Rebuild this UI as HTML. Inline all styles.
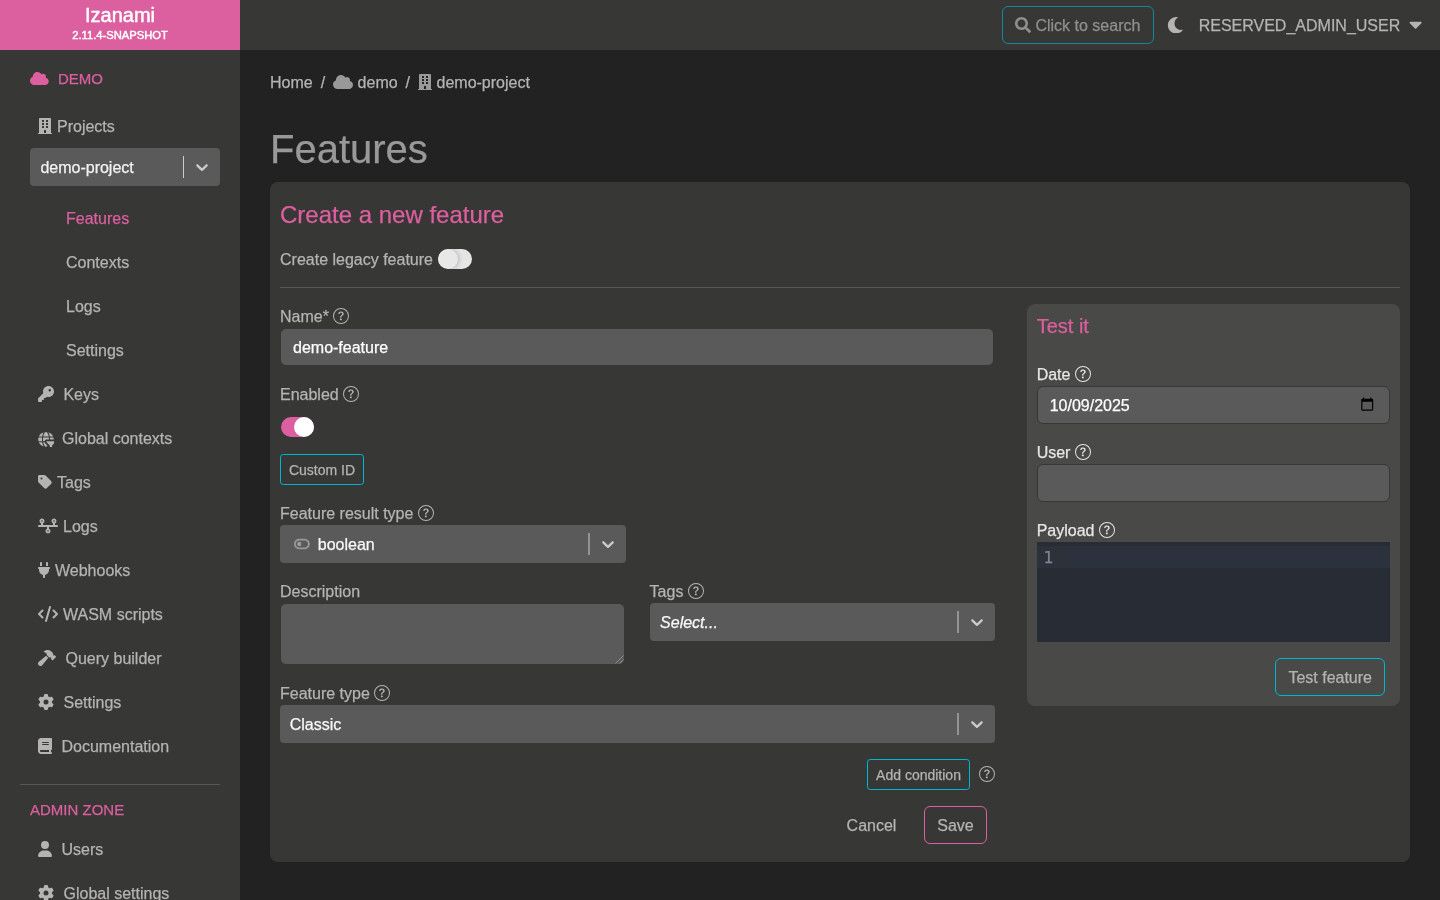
<!DOCTYPE html>
<html lang="en" data-theme="dark">
<head>
<meta charset="utf-8">
<meta name="viewport" content="width=device-width, initial-scale=1">
<title>Izanami - Features</title>
<style>
*,*::before,*::after{box-sizing:border-box}
html,body{margin:0;padding:0}
html{width:1440px;height:900px;overflow:hidden;background:#222}
body{
  position:relative;width:1440px;height:900px;overflow:hidden;
  background:#222;color:#b5b3b3;
  font-family:"Liberation Sans",Arial,Helvetica,sans-serif;
  font-size:16px;line-height:24px;
  -webkit-font-smoothing:antialiased;
  -webkit-text-stroke:0.25px;
}
.topbar,.sidebar,main{will-change:transform}
a{color:inherit;text-decoration:none}
ul{list-style:none;margin:0;padding:0}
h1,h2,h3,h4,p{margin:0;font-weight:400}
button{font-family:inherit;font-size:16px;line-height:24px;cursor:pointer;background:transparent;margin:0}
input,textarea{font-family:inherit;font-size:16px;line-height:24px;margin:0}
svg{display:block;fill:currentColor}
.ico{display:block;flex:none;position:relative;top:-1px}
.ico svg{position:absolute;left:0;top:0;width:100%;height:100%}

/* ---------- top bar ---------- */
.topbar{position:absolute;left:0;top:0;width:1440px;height:50px;background:#373735}
.brand{position:absolute;left:0;top:0;width:240px;height:50px;background:#dc5f9f;color:#fff;text-align:center;-webkit-text-stroke:.45px}
.brand .name{position:absolute;left:0;width:240px;top:3px;font-size:20px;line-height:24px}
.brand .version{position:absolute;left:0;width:240px;top:27px;font-size:11.2px;line-height:16px}
.search{position:absolute;left:1002px;top:6px;width:152px;height:38px;border:1px solid #00b4d4;border-radius:6px;color:#c0bebe;padding:0;text-align:left;opacity:.65}
.search .ico{position:absolute;left:12px;top:10px;width:16px;height:16px}
.search .txt{position:absolute;left:32.45px;top:7px;white-space:nowrap}
.theme.ico{position:absolute;left:1166.5px;top:16.8px;width:16.5px;height:16.5px;color:#b5b3b3}
.usermenu{position:absolute;left:1198.7px;top:14px;height:24px;color:#b5b3b3;white-space:nowrap}
.usermenu .caret.ico{position:absolute;left:210.7px;top:-.4px;width:13.2px;height:20.8px;color:#b5b3b3}

/* ---------- sidebar ---------- */
.sidebar{position:absolute;left:0;top:50px;width:240px;height:850px;background:#373735;color:#b5b3b3}
.sidebar .tenant{position:absolute;left:30px;top:17px;height:24px;color:#dc5f9f;white-space:nowrap;display:flex;align-items:center;font-size:15px}
.sidebar .item{position:absolute;left:38px;height:24px;white-space:nowrap;display:flex;align-items:center;margin-top:1px}
.sidebar .sub{position:absolute;left:66px;height:24px;white-space:nowrap;margin-top:1px}
.sidebar .active{color:#dc5f9f}
.sidebar hr{position:absolute;left:20px;top:734px;width:200px;height:1px;border:0;margin:0;background:#575655}
.sidebar .zone{position:absolute;left:30px;top:748px;color:#dc5f9f;white-space:nowrap;font-size:15px}

/* react-select look */
.rs{position:absolute;height:38px;background:#5a5a5a;border-radius:4px;color:#f7f7f7}
.rs .val{position:absolute;left:10.4px;top:8px;white-space:nowrap;display:flex;align-items:center;height:24px}
.rs .val.ph{font-style:italic}
.rs .tg{color:#999;margin-right:7.6px;top:-1px}
.rs .sep{position:absolute;right:36px;top:8px;width:2px;height:22px;background:rgba(204,204,204,.5)}
.rs.crisp .sep{width:1px;background:#ccc}
.rs.crisp{color:#f2f2f2}
.rs .chev.ico{position:absolute;right:8px;top:9px;width:20px;height:20px;color:#ccc}

/* ---------- main ---------- */
main{position:absolute;left:240px;top:50px;width:1200px;height:850px}
.crumbs{position:absolute;left:30px;top:21px;height:24px;white-space:nowrap;color:#b5b3b3;display:flex;align-items:center}
.crumbs a{display:flex;align-items:center}
.crumbs .ico{color:#999}
.crumbs .slash{display:block;padding:0 8px}
h1.title{position:absolute;left:30px;top:75px;font-size:40px;line-height:48px;color:#999;font-weight:400}
.card{position:absolute;left:30px;top:132px;width:1140px;height:680px;background:#373735;border-radius:8px}
.card h2{position:absolute;left:10px;top:18px;font-size:24px;line-height:29px;color:#dc5f9f}
.lbl{position:absolute;height:24px;white-space:pre;color:#b5b3b3;display:flex;align-items:center;margin-top:1px}
.lbl .q{display:block;flex:none;position:relative;top:-1px;width:16px;height:16px}
.lbl .q svg{width:16px;height:16px}
.field{position:absolute;background:#5a5a5a;border:1px solid #373735;border-radius:6px;color:#fff;padding:2px 12px 0;height:36px;outline:0}
.switch{position:absolute;width:33.4px;height:20px;border-radius:10px}
.switch i{position:absolute;top:0;width:20px;height:20px;border-radius:50%;background:#fff}
.switch.off{background:#e5e5e5;overflow:hidden}
.switch.off i{left:0;background:#e8e8e8;box-shadow:1px 0 5px 0 rgba(0,0,0,.22)}
.switch.on{background:#dc5f9f}
.switch.on i{right:0}
.btn{position:absolute;border:1px solid #00b4d4;border-radius:6px;color:#b5b3b3;padding:2px 0 0;text-align:center;white-space:nowrap}
.btn.sm{font-size:14px;line-height:21px;border-radius:3.2px}
.btn.plain{border-color:transparent}
.btn.save{border-color:#dc5f9f}
.field.txt{display:flex;align-items:center;white-space:nowrap}
.field.date{display:flex;align-items:center;padding-top:1px}
.field.date .cal{position:absolute;left:322.13px;top:9.9px;width:14.4px;height:14.4px;color:#000}
.field.date .cal svg{width:14.4px;height:14.4px}
.grip{position:absolute;width:10px;height:10px}
.sepline{position:absolute;left:10px;top:105px;width:1120px;height:1px;border:0;margin:0;background:#575655}

.test{position:absolute;left:756.67px;top:122px;width:373.33px;height:402px;background:#494948;border-radius:8px}
.test h3{position:absolute;left:10px;top:10px;font-size:20px;line-height:24px;color:#dc5f9f}
.test .lbl{color:#e6e6e6}
.editor{position:absolute;left:10px;top:238.3px;width:353.33px;height:100px;background:#282c34;overflow:hidden}
.editor .line{position:absolute;left:32px;top:4px;width:322px;height:22px;background:#2b313d}
.editor .gutter{position:absolute;left:0;top:4px;width:32px;height:22px;background:#2c313a;font-family:"DejaVu Sans Mono","Liberation Mono",monospace;font-size:16px;line-height:22px;color:#7d8799;text-align:left;padding:1px 0 0 6.8px}
</style>
</head>
<body>

<header class="topbar">
  <a class="brand"><span class="name">Izanami</span><span class="version">2.11.4-SNAPSHOT</span></a>
  <button class="search" type="button"><span class="ico"><svg viewBox="0 0 512 512" aria-hidden="true"><path d="M505 442.7L405.3 343c-4.500-4.500-10.600-7-17-7H372c27.600-35.300 44-79.700 44-128C416 93.100 322.900 0 208 0S0 93.100 0 208s93.100 208 208 208c48.300 0 92.700-16.400 128-44v16.300c0 6.400 2.500 12.500 7 17l99.700 99.700c9.400 9.400 24.600 9.400 33.900 0l28.300-28.300c9.400-9.400 9.400-24.600.1-34zM208 336c-70.700 0-128-57.200-128-128 0-70.700 57.200-128 128-128 70.700 0 128 57.200 128 128 0 70.700-57.200 128-128 128z"/></svg></span><span class="txt">Click to search</span></button>
  <span class="theme ico"><svg viewBox="0 0 512 512" aria-hidden="true"><path d="M283.211 512c78.962 0 151.079-35.925 198.857-94.792 7.068-8.708-.639-21.430-11.562-19.350-124.203 23.654-238.262-71.576-238.262-196.954 0-72.222 38.662-138.635 101.498-174.394 9.686-5.512 7.250-20.197-3.756-22.230A258.156 258.156 0 0 0 283.211 0c-141.309 0-256 114.511-256 256 0 141.309 114.511 256 256 256z"/></svg></span>
  <div class="usermenu">RESERVED_ADMIN_USER<span class="caret ico"><svg viewBox="0 0 320 512" aria-hidden="true"><path d="M31.300 192h257.300c17.800 0 26.700 21.500 14.100 34.100L174.100 354.800c-7.800 7.800-20.500 7.800-28.300 0L17.200 226.100C4.600 213.500 13.500 192 31.300 192z"/></svg></span></div>
</header>

<aside class="sidebar">
  <a class="tenant"><span class="ico" style="width:18.75px;height:15px;margin-right:9.25px;top:-.5px"><svg viewBox="0 0 640 512" aria-hidden="true"><path d="M537.600 226.600c4.100-10.700 6.400-22.400 6.400-34.600 0-53-43-96-96-96-19.700 0-38.100 6-53.300 16.200C367 64.200 315.300 32 256 32c-88.400 0-160 71.600-160 160 0 2.700.1 5.400.2 8.100C40.200 219.800 0 273.200 0 336c0 79.500 64.500 144 144 144h368c70.700 0 128-57.300 128-128 0-61.900-44-113.600-102.400-125.400z"/></svg></span>DEMO</a>
  <nav>
    <a class="item" style="top:64px"><span class="ico" style="width:14px;height:16px;margin-right:5px"><svg viewBox="0 0 448 512" aria-hidden="true"><path d="M436 480h-20V24c0-13.255-10.745-24-24-24H56C42.745 0 32 10.745 32 24v456H12c-6.627 0-12 5.373-12 12v20h448v-20c0-6.627-5.373-12-12-12zM128 76c0-6.627 5.373-12 12-12h40c6.627 0 12 5.373 12 12v40c0 6.627-5.373 12-12 12h-40c-6.627 0-12-5.373-12-12V76zm0 96c0-6.627 5.373-12 12-12h40c6.627 0 12 5.373 12 12v40c0 6.627-5.373 12-12 12h-40c-6.627 0-12-5.373-12-12v-40zm52 148h-40c-6.627 0-12-5.373-12-12v-40c0-6.627 5.373-12 12-12h40c6.627 0 12 5.373 12 12v40c0 6.627-5.373 12-12 12zm76 160h-64v-84c0-6.627 5.373-12 12-12h40c6.627 0 12 5.373 12 12v84zm64-172c0 6.627-5.373 12-12 12h-40c-6.627 0-12-5.373-12-12v-40c0-6.627 5.373-12 12-12h40c6.627 0 12 5.373 12 12v40zm0-96c0 6.627-5.373 12-12 12h-40c-6.627 0-12-5.373-12-12v-40c0-6.627 5.373-12 12-12h40c6.627 0 12 5.373 12 12v40zm0-96c0 6.627-5.373 12-12 12h-40c-6.627 0-12-5.373-12-12V76c0-6.627 5.373-12 12-12h40c6.627 0 12 5.373 12 12v40z"/></svg></span>Projects</a>
    <div class="rs crisp" style="left:30px;top:98px;width:190px"><span class="val">demo-project</span><span class="sep"></span><span class="chev ico"><svg viewBox="0 0 20 20" aria-hidden="true"><path d="M4.516 7.548c0.436-0.446 1.043-0.481 1.576 0l3.908 3.747 3.908-3.747c0.533-0.481 1.141-0.446 1.574 0 0.436 0.445 0.408 1.197 0 1.615-0.406 0.418-4.695 4.502-4.695 4.502-0.217 0.223-0.502 0.335-0.787 0.335s-0.570-0.112-0.789-0.335c0 0-4.287-4.084-4.695-4.502s-0.436-1.170 0-1.615z"/></svg></span></div>
    <ul>
      <li><a class="sub active" style="top:156px">Features</a></li>
      <li><a class="sub" style="top:200px">Contexts</a></li>
      <li><a class="sub" style="top:244px">Logs</a></li>
      <li><a class="sub" style="top:288px">Settings</a></li>
    </ul>
    <a class="item" style="top:332px"><span class="ico" style="width:16px;height:16px;margin-right:9.4px"><svg viewBox="0 0 512 512" aria-hidden="true"><path d="M336 352c97.200 0 176-78.800 176-176S433.200 0 336 0 160 78.800 160 176c0 18.700 2.900 36.800 8.300 53.700L7 391c-4.500 4.500-7 10.600-7 17v80c0 13.300 10.700 24 24 24h80c13.300 0 24-10.700 24-24v-40h40c13.300 0 24-10.700 24-24v-40h40c6.400 0 12.500-2.500 17-7l33.300-33.300c16.900 5.400 35 8.300 53.700 8.300m40-256a40 40 0 1 1 0 80 40 40 0 1 1 0-80"/></svg></span>Keys</a>
    <a class="item" style="top:376px"><span class="ico" style="width:16px;height:16px;margin-right:8px;top:-.5px"><svg viewBox="0 0 512 512" aria-hidden="true" overflow="visible"><path transform="translate(8 22) scale(1 0.955)" d="M336.500 160C322 70.700 287.800 8 248 8s-74 62.700-88.500 152h177zM152 256c0 22.200 1.200 43.500 3.300 64h185.300c2.100-20.500 3.300-41.800 3.300-64s-1.200-43.500-3.300-64H155.300c-2.100 20.500-3.300 41.800-3.300 64zm324.700-96c-28.600-67.900-86.500-120.400-158-141.600 24.400 33.800 41.200 84.700 50 141.600h108zM177.200 18.400C105.800 39.600 47.800 92.100 19.300 160h108c8.700-56.900 25.500-107.800 49.900-141.600zM487.400 192H372.700c2.100 21 3.300 42.500 3.300 64s-1.200 43-3.300 64h114.600c5.500-20.500 8.600-41.800 8.600-64s-3.100-43.500-8.500-64zM120 256c0-21.500 1.200-43 3.300-64H8.600C3.200 212.500 0 233.800 0 256s3.200 43.500 8.600 64h114.600c-2-21-3.200-42.500-3.200-64zm39.500 96c14.500 89.300 48.700 152 88.500 152s74-62.700 88.500-152h-177zm159.300 141.600c71.400-21.200 129.400-73.700 158-141.600h-108c-8.800 56.900-25.600 107.800-50 141.600zM19.300 352c28.600 67.900 86.500 120.400 158 141.600-24.400-33.800-41.200-84.700-50-141.600h-108z"/><svg x="0" y="0" width="512" height="552"><g transform="translate(264 330) scale(0.583)"><path d="M487.976 0H24.028C2.710 0-8.047 25.866 7.058 40.971L192 225.941V432c0 7.831 3.821 15.170 10.237 19.662l80 55.980C298.020 518.690 320 507.493 320 487.980V225.941l184.947-184.970C520.021 25.896 509.338 0 487.976 0z" fill="#373735" stroke="#373735" stroke-width="190" stroke-linejoin="round"/><path d="M487.976 0H24.028C2.710 0-8.047 25.866 7.058 40.971L192 225.941V432c0 7.831 3.821 15.170 10.237 19.662l80 55.980C298.020 518.690 320 507.493 320 487.980V225.941l184.947-184.970C520.021 25.896 509.338 0 487.976 0z"/></g></svg></svg></span>Global contexts</a>
    <a class="item" style="top:420px"><span class="ico" style="width:14px;height:16px;margin-right:5px"><svg viewBox="0 0 448 512" aria-hidden="true"><path d="M0 80V229.500c0 17 6.700 33.300 18.700 45.300l176 176c25 25 65.500 25 90.500 0L418.700 317.300c25-25 25-65.500 0-90.500l-176-176c-12-12-28.300-18.700-45.300-18.700H48C21.500 32 0 53.500 0 80zm112 32a32 32 0 1 1 0 64 32 32 0 1 1 0-64z"/></svg></span>Tags</a>
    <a class="item" style="top:464px"><span class="ico" style="width:20px;height:16px;margin-right:5px"><svg viewBox="0 0 640 512" aria-hidden="true"><path d="M128 72a24 24 0 1 1 0 48 24 24 0 1 1 0-48zm32 97.300c28.300-12.300 48-40.500 48-73.300c0-44.200-35.800-80-80-80S48 51.800 48 96c0 32.800 19.700 61 48 73.300V224H32c-17.700 0-32 14.300-32 32s14.300 32 32 32H288v54.700c-28.300 12.300-48 40.500-48 73.300c0 44.200 35.800 80 80 80s80-35.800 80-80c0-32.800-19.700-61-48-73.300V288H608c17.700 0 32-14.300 32-32s-14.300-32-32-32H544V169.300c28.300-12.300 48-40.500 48-73.300c0-44.200-35.800-80-80-80s-80 35.800-80 80c0 32.800 19.700 61 48 73.300V224H160V169.300zM488 96a24 24 0 1 1 48 0 24 24 0 1 1 -48 0zM320 392a24 24 0 1 1 0 48 24 24 0 1 1 0-48z"/></svg></span>Logs</a>
    <a class="item" style="top:508px"><span class="ico" style="width:12px;height:16px;margin-right:5px"><svg viewBox="0 0 384 512" aria-hidden="true"><path d="M96 0C78.300 0 64 14.300 64 32v96h64V32c0-17.700-14.300-32-32-32zM288 0c-17.700 0-32 14.300-32 32v96h64V32c0-17.700-14.300-32-32-32zM32 160c-17.700 0-32 14.300-32 32s14.300 32 32 32v32c0 77.400 55 142 128 156.800V480c0 17.700 14.300 32 32 32s32-14.300 32-32V412.800C297 398 352 333.400 352 256V224c17.700 0 32-14.300 32-32s-14.300-32-32-32H32z"/></svg></span>Webhooks</a>
    <a class="item" style="top:552px"><span class="ico" style="width:20px;height:16px;margin-right:5px"><svg viewBox="0 0 640 512" aria-hidden="true"><path d="M392.800 1.200c-17-4.900-34.700 5-39.600 22l-128 448c-4.900 17 5 34.700 22 39.600s34.700-5 39.600-22l128-448c4.900-17-5-34.700-22-39.600zm80.600 120.100c-12.500 12.500-12.500 32.800 0 45.300L562.700 256l-89.400 89.400c-12.500 12.500-12.500 32.800 0 45.300s32.800 12.500 45.300 0l112-112c12.500-12.500 12.500-32.800 0-45.300l-112-112c-12.500-12.500-32.800-12.500-45.300 0zm-306.700 0c-12.500-12.500-32.800-12.500-45.300 0l-112 112c-12.500 12.500-12.500 32.800 0 45.300l112 112c12.500 12.500 32.800 12.500 45.300 0s12.500-32.800 0-45.300L77.300 256l89.400-89.400c12.500-12.500 12.500-32.800 0-45.300z"/></svg></span>WASM scripts</a>
    <a class="item" style="top:596px"><span class="ico" style="width:18px;height:16px;margin-right:9.5px"><svg viewBox="0 0 576 512" aria-hidden="true"><path d="M413.500 237.500c-28.200 4.800-58.200-3.600-80-25.400l-38.100-38.100C280.400 159 272 138.800 272 117.600V105.500L192.300 62c-5.300-2.900-8.600-8.600-8.300-14.700s3.900-11.500 9.500-14l47.200-21C259.100 4.200 279 0 299.200 0h18.100c36.700 0 72 14 98.700 39.100l44.600 42c24.200 22.800 33.200 55.700 26.600 86L503 183l8-8c9.400-9.400 24.600-9.400 33.900 0l24 24c9.400 9.400 9.400 24.600 0 33.900l-88 88c-9.400 9.400-24.600 9.400-33.900 0l-24-24c-9.400-9.400-9.400-24.600 0-33.900l8-8-17.500-17.500zM27.400 377.100L260.900 182.600c3.500 4.900 7.500 9.600 11.800 14l38.100 38.100c6 6 12.400 11.200 19.200 15.700L134.900 484.600c-14.500 17.400-36 27.400-58.600 27.400C34.100 512 0 477.800 0 435.700c0-22.600 10.100-44.100 27.400-58.600z"/></svg></span>Query builder</a>
    <a class="item" style="top:640px"><span class="ico" style="width:16px;height:16px;margin-right:9.5px"><svg viewBox="0 0 512 512" aria-hidden="true"><path d="M495.900 166.600c3.200 8.700 .5 18.400-6.400 24.600l-43.300 39.400c1.100 8.300 1.700 16.800 1.700 25.400s-.6 17.100-1.700 25.400l43.300 39.400c6.900 6.200 9.600 15.900 6.400 24.600c-4.400 11.900-9.700 23.300-15.800 34.300l-4.700 8.100c-6.600 11-14 21.400-22.100 31.200c-5.900 7.200-15.700 9.600-24.500 6.800l-55.700-17.700c-13.400 10.300-28.200 18.900-44 25.400l-12.500 57.100c-2 9.100-9 16.300-18.200 17.800c-13.800 2.300-28 3.500-42.500 3.500s-28.700-1.200-42.500-3.500c-9.200-1.500-16.200-8.700-18.200-17.800l-12.500-57.100c-15.800-6.500-30.600-15.100-44-25.400L83.100 425.900c-8.800 2.800-18.600 .3-24.500-6.800c-8.100-9.800-15.500-20.200-22.100-31.200l-4.700-8.100c-6.100-11-11.400-22.400-15.800-34.300c-3.200-8.700-.5-18.400 6.400-24.600l43.300-39.400C64.600 273.100 64 264.600 64 256s.6-17.100 1.700-25.400L22.400 191.200c-6.900-6.200-9.600-15.900-6.400-24.600c4.400-11.900 9.700-23.300 15.800-34.300l4.700-8.100c6.600-11 14-21.400 22.100-31.200c5.900-7.200 15.700-9.600 24.500-6.800l55.700 17.700c13.400-10.300 28.200-18.900 44-25.400l12.500-57.100c2-9.100 9-16.300 18.200-17.800C227.300 1.200 241.500 0 256 0s28.700 1.200 42.500 3.500c9.200 1.500 16.200 8.700 18.200 17.800l12.500 57.100c15.800 6.500 30.600 15.100 44 25.400l55.700-17.700c8.800-2.800 18.600-.3 24.500 6.800c8.100 9.800 15.500 20.200 22.100 31.200l4.700 8.100c6.100 11 11.400 22.400 15.800 34.300zM256 336a80 80 0 1 0 0-160 80 80 0 1 0 0 160z"/></svg></span>Settings</a>
    <a class="item" style="top:684px"><span class="ico" style="width:14px;height:16px;margin-right:9.5px"><svg viewBox="0 0 448 512" aria-hidden="true"><path d="M96 0C43 0 0 43 0 96V416c0 53 43 96 96 96H384h32c17.700 0 32-14.300 32-32s-14.300-32-32-32V384c17.700 0 32-14.300 32-32V32c0-17.700-14.300-32-32-32H384 96zm0 384H352v64H96c-17.700 0-32-14.300-32-32s14.300-32 32-32zm32-240c0-8.800 7.200-16 16-16H336c8.800 0 16 7.200 16 16s-7.200 16-16 16H144c-8.800 0-16-7.200-16-16zm16 48H336c8.800 0 16 7.200 16 16s-7.200 16-16 16H144c-8.800 0-16-7.200-16-16s7.200-16 16-16z"/></svg></span>Documentation</a>
    <hr>
    <div class="zone">ADMIN ZONE</div>
    <a class="item" style="top:787px"><span class="ico" style="width:14px;height:16px;margin-right:9.5px"><svg viewBox="0 0 448 512" aria-hidden="true"><path d="M224 256A128 128 0 1 0 224 0a128 128 0 1 0 0 256zm-45.700 48C79.800 304 0 383.800 0 482.300C0 498.700 13.300 512 29.700 512H418.300c16.400 0 29.700-13.300 29.700-29.700C448 383.800 368.200 304 269.700 304H178.300z"/></svg></span>Users</a>
    <a class="item" style="top:831px"><span class="ico" style="width:16px;height:16px;margin-right:9.5px"><svg viewBox="0 0 512 512" aria-hidden="true"><path d="M495.900 166.600c3.200 8.700 .5 18.400-6.400 24.600l-43.300 39.400c1.100 8.300 1.700 16.800 1.700 25.400s-.6 17.100-1.700 25.400l43.300 39.400c6.900 6.200 9.600 15.900 6.400 24.600c-4.400 11.900-9.700 23.300-15.800 34.300l-4.700 8.100c-6.600 11-14 21.400-22.100 31.200c-5.900 7.200-15.700 9.600-24.500 6.800l-55.700-17.700c-13.400 10.300-28.200 18.900-44 25.400l-12.500 57.100c-2 9.100-9 16.300-18.200 17.800c-13.800 2.300-28 3.500-42.500 3.500s-28.700-1.200-42.500-3.500c-9.200-1.500-16.200-8.700-18.200-17.800l-12.500-57.100c-15.800-6.500-30.600-15.100-44-25.400L83.100 425.900c-8.800 2.800-18.600 .3-24.500-6.800c-8.100-9.800-15.500-20.200-22.100-31.200l-4.700-8.100c-6.100-11-11.400-22.400-15.800-34.300c-3.200-8.700-.5-18.400 6.400-24.600l43.300-39.400C64.600 273.100 64 264.600 64 256s.6-17.100 1.700-25.400L22.400 191.200c-6.900-6.200-9.600-15.900-6.400-24.600c4.400-11.900 9.700-23.300 15.800-34.300l4.700-8.100c6.600-11 14-21.400 22.100-31.200c5.900-7.200 15.700-9.600 24.500-6.800l55.700 17.700c13.400-10.300 28.200-18.900 44-25.400l12.500-57.100c2-9.100 9-16.300 18.200-17.800C227.300 1.200 241.500 0 256 0s28.700 1.200 42.500 3.500c9.200 1.500 16.200 8.700 18.200 17.800l12.500 57.100c15.800 6.500 30.600 15.100 44 25.400l55.700-17.700c8.800-2.800 18.600-.3 24.500 6.800c8.100 9.800 15.500 20.200 22.100 31.200l4.700 8.100c6.100 11 11.400 22.400 15.800 34.300zM256 336a80 80 0 1 0 0-160 80 80 0 1 0 0 160z"/></svg></span>Global settings</a>
  </nav>
</aside>

<main>
  <nav class="crumbs" aria-label="breadcrumb"><a>Home</a><span class="slash">/</span><a><span class="ico" style="width:20px;height:16px;margin-right:4.45px"><svg viewBox="0 0 640 512" aria-hidden="true"><path d="M537.600 226.600c4.100-10.700 6.400-22.400 6.400-34.600 0-53-43-96-96-96-19.700 0-38.100 6-53.300 16.200C367 64.200 315.300 32 256 32c-88.400 0-160 71.600-160 160 0 2.700.1 5.400.2 8.100C40.200 219.800 0 273.200 0 336c0 79.500 64.500 144 144 144h368c70.700 0 128-57.300 128-128 0-61.900-44-113.600-102.400-125.400z"/></svg></span>demo</a><span class="slash">/</span><a><span class="ico" style="width:14px;height:16px;margin-right:4.45px"><svg viewBox="0 0 448 512" aria-hidden="true"><path d="M436 480h-20V24c0-13.255-10.745-24-24-24H56C42.745 0 32 10.745 32 24v456H12c-6.627 0-12 5.373-12 12v20h448v-20c0-6.627-5.373-12-12-12zM128 76c0-6.627 5.373-12 12-12h40c6.627 0 12 5.373 12 12v40c0 6.627-5.373 12-12 12h-40c-6.627 0-12-5.373-12-12V76zm0 96c0-6.627 5.373-12 12-12h40c6.627 0 12 5.373 12 12v40c0 6.627-5.373 12-12 12h-40c-6.627 0-12-5.373-12-12v-40zm52 148h-40c-6.627 0-12-5.373-12-12v-40c0-6.627 5.373-12 12-12h40c6.627 0 12 5.373 12 12v40c0 6.627-5.373 12-12 12zm76 160h-64v-84c0-6.627 5.373-12 12-12h40c6.627 0 12 5.373 12 12v84zm64-172c0 6.627-5.373 12-12 12h-40c-6.627 0-12-5.373-12-12v-40c0-6.627 5.373-12 12-12h40c6.627 0 12 5.373 12 12v40zm0-96c0 6.627-5.373 12-12 12h-40c-6.627 0-12-5.373-12-12v-40c0-6.627 5.373-12 12-12h40c6.627 0 12 5.373 12 12v40zm0-96c0 6.627-5.373 12-12 12h-40c-6.627 0-12-5.373-12-12V76c0-6.627 5.373-12 12-12h40c6.627 0 12 5.373 12 12v40z"/></svg></span>demo-project</a></nav>
  <h1 class="title">Features</h1>
  <section class="card">
    <h2>Create a new feature</h2>
    <label class="lbl" style="left:10px;top:65px">Create legacy feature</label>
    <span class="switch off" style="left:168.2px;top:67px"><i></i></span>
    <hr class="sepline">

    <label class="lbl" style="left:10px;top:122px">Name* <span class="q"><svg viewBox="0 0 16 16" aria-hidden="true"><path d="M8 15A7 7 0 1 1 8 1a7 7 0 0 1 0 14m0 1A8 8 0 1 0 8 0a8 8 0 0 0 0 16M5.255 5.786a.237.237 0 0 0 .241.247h.825c.138 0 .248-.113.266-.25.09-.656.54-1.134 1.342-1.134.686 0 1.314.343 1.314 1.168 0 .635-.374.927-.965 1.371-.673.489-1.206 1.060-1.168 1.987l.003.217a.25.25 0 0 0 .25.246h.811a.25.25 0 0 0 .25-.25v-.105c0-.718.273-.927 1.010-1.486.609-.463 1.244-.977 1.244-2.056 0-1.511-1.276-2.241-2.673-2.241-1.267 0-2.655.59-2.750 2.286m1.557 5.763c0 .533.425.927 1.010.927.609 0 1.028-.394 1.028-.927 0-.552-.42-.94-1.029-.94-.584 0-1.009.388-1.009.94"/></svg></span></label>
    <div class="field txt" role="textbox" aria-label="Name" style="left:10px;top:146px;width:714.2px;height:38px">demo-feature</div>

    <label class="lbl" style="left:10px;top:200px">Enabled <span class="q"><svg viewBox="0 0 16 16" aria-hidden="true"><path d="M8 15A7 7 0 1 1 8 1a7 7 0 0 1 0 14m0 1A8 8 0 1 0 8 0a8 8 0 0 0 0 16M5.255 5.786a.237.237 0 0 0 .241.247h.825c.138 0 .248-.113.266-.25.09-.656.54-1.134 1.342-1.134.686 0 1.314.343 1.314 1.168 0 .635-.374.927-.965 1.371-.673.489-1.206 1.060-1.168 1.987l.003.217a.25.25 0 0 0 .25.246h.811a.25.25 0 0 0 .25-.25v-.105c0-.718.273-.927 1.010-1.486.609-.463 1.244-.977 1.244-2.056 0-1.511-1.276-2.241-2.673-2.241-1.267 0-2.655.59-2.750 2.286m1.557 5.763c0 .533.425.927 1.010.927.609 0 1.028-.394 1.028-.927 0-.552-.42-.94-1.029-.94-.584 0-1.009.388-1.009.94"/></svg></span></label>
    <span class="switch on" style="left:10.8px;top:235px"><i></i></span>

    <button class="btn sm" type="button" style="left:10px;top:272px;width:84px;height:31px">Custom ID</button>

    <label class="lbl" style="left:10px;top:319px">Feature result type <span class="q"><svg viewBox="0 0 16 16" aria-hidden="true"><path d="M8 15A7 7 0 1 1 8 1a7 7 0 0 1 0 14m0 1A8 8 0 1 0 8 0a8 8 0 0 0 0 16M5.255 5.786a.237.237 0 0 0 .241.247h.825c.138 0 .248-.113.266-.25.09-.656.54-1.134 1.342-1.134.686 0 1.314.343 1.314 1.168 0 .635-.374.927-.965 1.371-.673.489-1.206 1.060-1.168 1.987l.003.217a.25.25 0 0 0 .25.246h.811a.25.25 0 0 0 .25-.25v-.105c0-.718.273-.927 1.010-1.486.609-.463 1.244-.977 1.244-2.056 0-1.511-1.276-2.241-2.673-2.241-1.267 0-2.655.59-2.750 2.286m1.557 5.763c0 .533.425.927 1.010.927.609 0 1.028-.394 1.028-.927 0-.552-.42-.94-1.029-.94-.584 0-1.009.388-1.009.94"/></svg></span></label>
    <div class="rs" style="left:10px;top:343px;width:345.5px"><span class="val" style="left:14.4px"><span class="ico tg" style="width:15.75px;height:14px"><svg viewBox="0 0 576 512" aria-hidden="true"><path d="M384 128c70.700 0 128 57.300 128 128s-57.300 128-128 128H192c-70.700 0-128-57.300-128-128s57.300-128 128-128zm192 128c0-106-86-192-192-192H192C86 64 0 150 0 256s86 192 192 192h192c106 0 192-86 192-192m-384 80a80 80 0 1 0 0-160 80 80 0 1 0 0 160"/></svg></span>boolean</span><span class="sep"></span><span class="chev ico"><svg viewBox="0 0 20 20" aria-hidden="true"><path d="M4.516 7.548c0.436-0.446 1.043-0.481 1.576 0l3.908 3.747 3.908-3.747c0.533-0.481 1.141-0.446 1.574 0 0.436 0.445 0.408 1.197 0 1.615-0.406 0.418-4.695 4.502-4.695 4.502-0.217 0.223-0.502 0.335-0.787 0.335s-0.570-0.112-0.789-0.335c0 0-4.287-4.084-4.695-4.502s-0.436-1.170 0-1.615z"/></svg></span></div>

    <label class="lbl" style="left:10px;top:397px">Description</label>
    <textarea class="field" rows="2" style="left:10px;top:421px;width:345.2px;height:62px;resize:none"></textarea>
    <span class="grip" style="left:343.5px;top:471.5px"><svg viewBox="0 0 10 10"><path d="M9.500 1.500L1.500 9.500M9.500 5.500L5.500 9.500" stroke="#8f8f8f" stroke-width="1" fill="none"/></svg></span>

    <label class="lbl" style="left:379.6px;top:397px">Tags <span class="q"><svg viewBox="0 0 16 16" aria-hidden="true"><path d="M8 15A7 7 0 1 1 8 1a7 7 0 0 1 0 14m0 1A8 8 0 1 0 8 0a8 8 0 0 0 0 16M5.255 5.786a.237.237 0 0 0 .241.247h.825c.138 0 .248-.113.266-.25.09-.656.54-1.134 1.342-1.134.686 0 1.314.343 1.314 1.168 0 .635-.374.927-.965 1.371-.673.489-1.206 1.060-1.168 1.987l.003.217a.25.25 0 0 0 .25.246h.811a.25.25 0 0 0 .25-.25v-.105c0-.718.273-.927 1.010-1.486.609-.463 1.244-.977 1.244-2.056 0-1.511-1.276-2.241-2.673-2.241-1.267 0-2.655.59-2.750 2.286m1.557 5.763c0 .533.425.927 1.010.927.609 0 1.028-.394 1.028-.927 0-.552-.42-.94-1.029-.94-.584 0-1.009.388-1.009.94"/></svg></span></label>
    <div class="rs" style="left:379.7px;top:421px;width:344.9px"><span class="val ph">Select...</span><span class="sep"></span><span class="chev ico"><svg viewBox="0 0 20 20" aria-hidden="true"><path d="M4.516 7.548c0.436-0.446 1.043-0.481 1.576 0l3.908 3.747 3.908-3.747c0.533-0.481 1.141-0.446 1.574 0 0.436 0.445 0.408 1.197 0 1.615-0.406 0.418-4.695 4.502-4.695 4.502-0.217 0.223-0.502 0.335-0.787 0.335s-0.570-0.112-0.789-0.335c0 0-4.287-4.084-4.695-4.502s-0.436-1.170 0-1.615z"/></svg></span></div>

    <label class="lbl" style="left:10px;top:499px">Feature type <span class="q"><svg viewBox="0 0 16 16" aria-hidden="true"><path d="M8 15A7 7 0 1 1 8 1a7 7 0 0 1 0 14m0 1A8 8 0 1 0 8 0a8 8 0 0 0 0 16M5.255 5.786a.237.237 0 0 0 .241.247h.825c.138 0 .248-.113.266-.25.09-.656.54-1.134 1.342-1.134.686 0 1.314.343 1.314 1.168 0 .635-.374.927-.965 1.371-.673.489-1.206 1.060-1.168 1.987l.003.217a.25.25 0 0 0 .25.246h.811a.25.25 0 0 0 .25-.25v-.105c0-.718.273-.927 1.010-1.486.609-.463 1.244-.977 1.244-2.056 0-1.511-1.276-2.241-2.673-2.241-1.267 0-2.655.59-2.750 2.286m1.557 5.763c0 .533.425.927 1.010.927.609 0 1.028-.394 1.028-.927 0-.552-.42-.94-1.029-.94-.584 0-1.009.388-1.009.94"/></svg></span></label>
    <div class="rs" style="left:10px;top:523px;width:714.6px"><span class="val" style="left:9.7px">Classic</span><span class="sep"></span><span class="chev ico"><svg viewBox="0 0 20 20" aria-hidden="true"><path d="M4.516 7.548c0.436-0.446 1.043-0.481 1.576 0l3.908 3.747 3.908-3.747c0.533-0.481 1.141-0.446 1.574 0 0.436 0.445 0.408 1.197 0 1.615-0.406 0.418-4.695 4.502-4.695 4.502-0.217 0.223-0.502 0.335-0.787 0.335s-0.570-0.112-0.789-0.335c0 0-4.287-4.084-4.695-4.502s-0.436-1.170 0-1.615z"/></svg></span></div>

    <button class="btn sm" type="button" style="left:597px;top:577px;width:103px;height:31px">Add condition</button>
    <span class="lbl" style="left:709px;top:580px"><span class="q" style="margin-left:0"><svg viewBox="0 0 16 16" aria-hidden="true"><path d="M8 15A7 7 0 1 1 8 1a7 7 0 0 1 0 14m0 1A8 8 0 1 0 8 0a8 8 0 0 0 0 16M5.255 5.786a.237.237 0 0 0 .241.247h.825c.138 0 .248-.113.266-.25.09-.656.54-1.134 1.342-1.134.686 0 1.314.343 1.314 1.168 0 .635-.374.927-.965 1.371-.673.489-1.206 1.060-1.168 1.987l.003.217a.25.25 0 0 0 .25.246h.811a.25.25 0 0 0 .25-.25v-.105c0-.718.273-.927 1.010-1.486.609-.463 1.244-.977 1.244-2.056 0-1.511-1.276-2.241-2.673-2.241-1.267 0-2.655.59-2.750 2.286m1.557 5.763c0 .533.425.927 1.010.927.609 0 1.028-.394 1.028-.927 0-.552-.42-.94-1.029-.94-.584 0-1.009.388-1.009.94"/></svg></span></span>

    <button class="btn plain" type="button" style="left:563.5px;top:624px;width:76px;height:38px">Cancel</button>
    <button class="btn save" type="button" style="left:654px;top:624px;width:63px;height:38px">Save</button>

    <aside class="test">
      <h3>Test it</h3>
      <label class="lbl" style="left:10px;top:58.3px">Date <span class="q"><svg viewBox="0 0 16 16" aria-hidden="true"><path d="M8 15A7 7 0 1 1 8 1a7 7 0 0 1 0 14m0 1A8 8 0 1 0 8 0a8 8 0 0 0 0 16M5.255 5.786a.237.237 0 0 0 .241.247h.825c.138 0 .248-.113.266-.25.09-.656.54-1.134 1.342-1.134.686 0 1.314.343 1.314 1.168 0 .635-.374.927-.965 1.371-.673.489-1.206 1.060-1.168 1.987l.003.217a.25.25 0 0 0 .25.246h.811a.25.25 0 0 0 .25-.25v-.105c0-.718.273-.927 1.010-1.486.609-.463 1.244-.977 1.244-2.056 0-1.511-1.276-2.241-2.673-2.241-1.267 0-2.655.59-2.750 2.286m1.557 5.763c0 .533.425.927 1.010.927.609 0 1.028-.394 1.028-.927 0-.552-.42-.94-1.029-.94-.584 0-1.009.388-1.009.94"/></svg></span></label>
      <div class="field date" style="left:10px;top:82.3px;width:353.3px;height:38px">10/09/2025<span class="cal"><svg viewBox="0 0 24 24" preserveAspectRatio="none" aria-hidden="true"><path d="M20 3h-1V1h-2v2H7V1H5v2H4c-1.100 0-2 .9-2 2v16c0 1.100.9 2 2 2h16c1.100 0 2-.9 2-2V5c0-1.100-.9-2-2-2zm0 18H4V8h16v13z"/></svg></span></div>
      <label class="lbl" style="left:10px;top:136.3px">User <span class="q"><svg viewBox="0 0 16 16" aria-hidden="true"><path d="M8 15A7 7 0 1 1 8 1a7 7 0 0 1 0 14m0 1A8 8 0 1 0 8 0a8 8 0 0 0 0 16M5.255 5.786a.237.237 0 0 0 .241.247h.825c.138 0 .248-.113.266-.25.09-.656.54-1.134 1.342-1.134.686 0 1.314.343 1.314 1.168 0 .635-.374.927-.965 1.371-.673.489-1.206 1.060-1.168 1.987l.003.217a.25.25 0 0 0 .25.246h.811a.25.25 0 0 0 .25-.25v-.105c0-.718.273-.927 1.010-1.486.609-.463 1.244-.977 1.244-2.056 0-1.511-1.276-2.241-2.673-2.241-1.267 0-2.655.59-2.750 2.286m1.557 5.763c0 .533.425.927 1.010.927.609 0 1.028-.394 1.028-.927 0-.552-.42-.94-1.029-.94-.584 0-1.009.388-1.009.94"/></svg></span></label>
      <input class="field" type="text" value="" style="left:10px;top:160.3px;width:353.3px;height:38px">
      <label class="lbl" style="left:10px;top:214.3px">Payload <span class="q"><svg viewBox="0 0 16 16" aria-hidden="true"><path d="M8 15A7 7 0 1 1 8 1a7 7 0 0 1 0 14m0 1A8 8 0 1 0 8 0a8 8 0 0 0 0 16M5.255 5.786a.237.237 0 0 0 .241.247h.825c.138 0 .248-.113.266-.25.09-.656.54-1.134 1.342-1.134.686 0 1.314.343 1.314 1.168 0 .635-.374.927-.965 1.371-.673.489-1.206 1.060-1.168 1.987l.003.217a.25.25 0 0 0 .25.246h.811a.25.25 0 0 0 .25-.25v-.105c0-.718.273-.927 1.010-1.486.609-.463 1.244-.977 1.244-2.056 0-1.511-1.276-2.241-2.673-2.241-1.267 0-2.655.59-2.750 2.286m1.557 5.763c0 .533.425.927 1.010.927.609 0 1.028-.394 1.028-.927 0-.552-.42-.94-1.029-.94-.584 0-1.009.388-1.009.94"/></svg></span></label>
      <div class="editor"><div class="line"></div><div class="gutter">1</div></div>
      <button class="btn" type="button" style="left:248.8px;top:354.3px;width:109.5px;height:38px">Test feature</button>
    </aside>
  </section>
</main>

</body>
</html>
